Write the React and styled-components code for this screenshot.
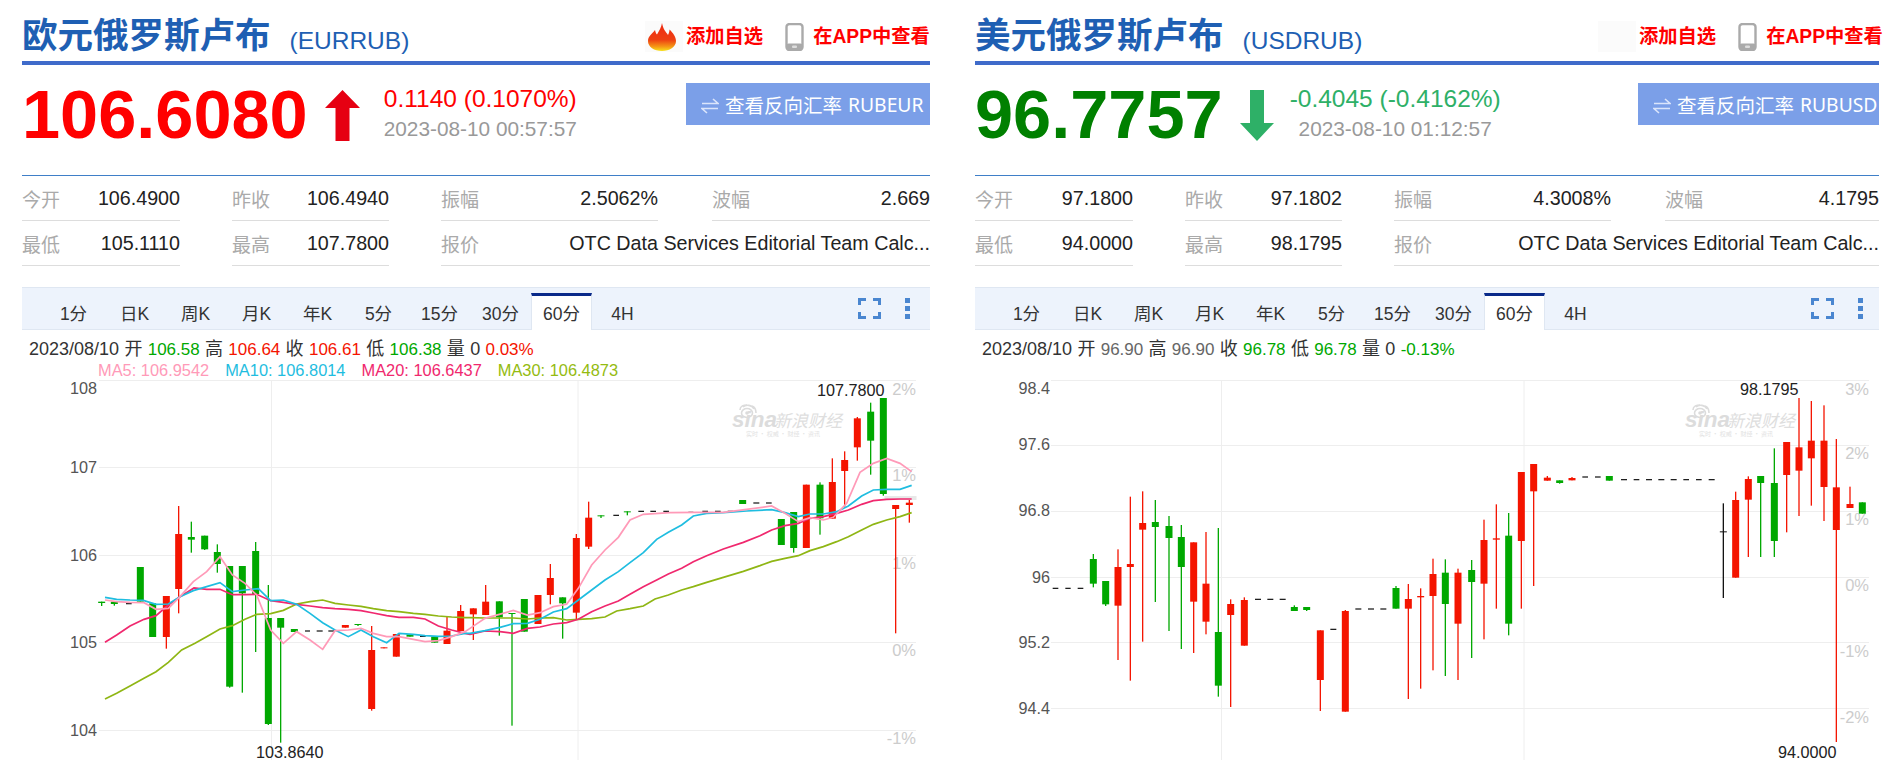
import React from 'react';
import styled, { createGlobalStyle } from 'styled-components';

const GlobalStyle = createGlobalStyle`
  html, body {
    margin: 0;
    padding: 0;
    background: #fff;
    overflow: hidden;
  }
  body {
    font-family: "Liberation Sans", "Noto Sans CJK SC", sans-serif;
  }
`;

const RED = '#f41400';
const GREEN = '#00a800';

const Page = styled.div`
  display: flex;
  gap: 45px;
  width: 1900px;
  height: 760px;
  padding-left: 22px;
  box-sizing: border-box;
  overflow: hidden;
`;
const Panel = styled.section`
  width: ${props => props.$width}px;
  flex: none;
`;
const Head = styled.header`
  display: flex;
  align-items: flex-start;
  height: 61px;
  border-bottom: 4px solid #3f6bca;
`;
const TitleGroup = styled.div`
  display: flex;
  align-items: flex-start;
  width: 623px;
  flex: none;
`;
const Title = styled.h1`
  margin: 16px 0 0;
  font-size: 35.5px;
  line-height: 40px;
  font-weight: 700;
  color: #1e5fb3;
  white-space: nowrap;
`;
const Code = styled.span`
  margin: 27px 0 0 19px;
  font-size: 24.5px;
  line-height: 28px;
  color: #1e5fb3;
`;
const Actions = styled.div`
  display: flex;
  align-items: center;
  margin-top: 21px;
  height: 31px;
`;
const FlameBox = styled.div`
  width: 38px;
  height: 31px;
  background: #fbfbfb;
  display: flex;
  flex: none;
  padding-left: 2px;
  box-sizing: border-box;
`;
const ActionText = styled.span`
  margin-left: ${props => props.$gap}px;
  font-size: 19.3px;
  line-height: 24px;
  font-weight: 700;
  color: #f00;
  white-space: nowrap;
`;
const PhoneIcon = styled.svg`
  margin-left: 22px;
  flex: none;
`;
const Quote = styled.div`
  display: flex;
  height: 110px;
  border-bottom: 1px solid #3f7fc8;
  box-sizing: content-box;
`;
const Price = styled.div`
  margin-top: 11px;
  font-size: 68.5px;
  line-height: 78px;
  font-weight: 700;
  color: ${props => (props.$up ? '#f00' : '#008000')};
`;
const Arrow = styled.svg`
  flex: none;
  margin: 25px ${props => (props.$up ? 24 : 16)}px 0 17px;
`;
const Change = styled.div`
  margin-top: 20px;
  text-align: center;
`;
const ChangeValue = styled.div`
  font-size: 24.5px;
  line-height: 28px;
  color: ${props => (props.$up ? '#f00' : '#2eb067')};
  white-space: nowrap;
`;
const Time = styled.div`
  margin-top: 3px;
  font-size: 20.8px;
  line-height: 26px;
  color: #999;
  white-space: nowrap;
`;
const ReverseButton = styled.div`
  display: flex;
  align-items: center;
  box-sizing: border-box;
  margin: 18px 0 0 auto;
  width: ${props => props.$width}px;
  height: 42px;
  padding-left: 15px;
  background: #7b9fe8;
  color: #fff;
  font-family: "Noto Sans", "Noto Sans CJK SC", sans-serif;
  font-size: 19.5px;
  white-space: nowrap;
`;
const ReversePair = styled.span`
  margin-left: 6px;
  font-size: 19.3px;
`;
const ReverseIcon = styled.svg`
  margin: 4px 6px 0 0;
  flex: none;
`;
const Stats = styled.div`
  display: grid;
  grid-template-columns: 158px 157px 217px 1fr;
  column-gap: 52px;
  grid-auto-rows: 45px;
`;
const Stat = styled.div`
  display: flex;
  justify-content: space-between;
  align-items: center;
  border-bottom: 1px solid #ddd;
  grid-column: ${props => (props.$wide ? 'span 2' : 'auto')};
  margin-left: ${props => (props.$last ? 2 : 0)}px;
`;
const StatLabel = styled.span`
  font-size: 19px;
  color: #aaa;
`;
const StatValue = styled.span`
  font-size: 19.7px;
  color: #222;
  white-space: nowrap;
`;
const TabBar = styled.div`
  display: flex;
  align-items: flex-end;
  box-sizing: border-box;
  margin-top: 21px;
  height: 43px;
  padding-left: 21px;
  background: #edf3fc;
  border-top: 1px solid #dfe7f2;
  border-bottom: 1px solid #dfe7f2;
`;
const Tab = styled.div`
  box-sizing: border-box;
  width: 61px;
  height: 37px;
  margin-bottom: -1px;
  font-size: 17.5px;
  line-height: 36px;
  text-align: center;
  color: #333;
  background: ${props => (props.$active ? '#fff' : 'transparent')};
  border-top: 3px solid ${props => (props.$active ? '#0a2a8a' : 'transparent')};
  border-left: 1px solid ${props => (props.$active ? '#dfe7f2' : 'transparent')};
  border-right: 1px solid ${props => (props.$active ? '#dfe7f2' : 'transparent')};
`;
const TabTools = styled.div`
  display: flex;
  align-items: center;
  gap: 24px;
  margin-left: auto;
  height: 41px;
  padding-right: ${props => props.$pad}px;
  align-self: center;
`;
const Dots = styled.div`
  display: flex;
  flex-direction: column;
  gap: 3px;
`;
const Dot = styled.i`
  display: block;
  width: 5px;
  height: 5px;
  background: #4a86d0;
`;
const Info = styled.div`
  height: 50px;
  padding-top: 9px;
  box-sizing: border-box;
  font-size: 18px;
  line-height: 21px;
  color: #333;
`;
const InfoLine = styled.div`
  padding-left: 7px;
  white-space: nowrap;
  word-spacing: 0.3px;
`;
const Num = styled.span`
  font-size: 17px;
  color: ${props => (props.$c === 'g' ? GREEN : props.$c === 'r' ? RED : '#666')};
`;
const MaLine = styled.div`
  display: flex;
  gap: 16px;
  padding-left: 76px;
  font-size: 16.4px;
`;
const MaItem = styled.span`
  color: ${props => props.$color};
  white-space: nowrap;
`;
const ChartSvg = styled.svg`
  display: block;
`;
const AxisText = styled.text`
  font-family: "Liberation Sans", sans-serif;
  font-size: 16.2px;
  fill: #555;
`;
const PctText = styled(AxisText)`
  fill: #ccc;
  font-size: 16.5px;
`;
const ExtremeText = styled(AxisText)`
  fill: #222;
`;
const MarkSina = styled.text`
  font-family: "Liberation Sans", sans-serif;
  font-size: 22.5px;
  font-weight: 700;
  font-style: italic;
  fill: #dcdcdc;
`;
const MarkName = styled.text`
  font-family: "Noto Sans CJK SC", sans-serif;
  font-size: 17px;
  font-style: italic;
  fill: #dedede;
`;
const MarkSub = styled.text`
  font-family: "Noto Sans CJK SC", sans-serif;
  font-size: 6px;
  fill: #e2e2e2;
`;

// chart data traced from 3x crops: x is in crop px from ox, y in crop px from 370
const eurGroups = [
  {
    ox: 0,
    candles: [
      [305, 695, 699, null, 708, 'g'], [343, 695, 702, null, 707, 'g'], [421, 591, 695, null, null, 'g'],
      [458, 700, 801, null, null, 'g'], [499, 678, 801, null, 836, 'r'], [536, 492, 657, 408, 730, 'r'],
      [574, 501, 509, 455, 548, 'g'], [614, 497, 538, null, 540, 'g'], [652, 546, 582, 523, 608, 'g'],
      [689, 588, 950, null, 953, 'g'], [727, 588, 670, null, 968, 'g'], [767, 543, 672, 516, 846, 'g'],
      [805, 744, 1062, 645, 1065, 'g'], [842, 744, 773, null, 1118, 'g'], [883, 777, 786, null, null, 'g'],
      [1036, 765, 773, null, null, 'r'], [1074, 762, 765, null, 768, 'g'], [1115, 840, 1017, 768, 1022, 'r'],
      [1152, 832, 835, null, null, 'r'], [1189, 792, 860, null, null, 'r'], [1230, 793, 800, null, null, 'g'],
      [1304, 800, 818, null, null, 'g'], [1341, 782, 822, 740, null, 'r'], [1382, 723, 783, 705, null, 'r'],
    ],
    dashes: [[378, 395, 701], [915, 930, 783], [950, 968, 783], [985, 1003, 783], [1260, 1277, 799]],
  },
  {
    ox: 470,
    candles: [
      [10, 715, 733, null, 810, 'r'], [47, 695, 735, 645, null, 'r'], [88, 694, 742, null, 797, 'g'],
      [126, 729, 732, null, 1067, 'g'], [163, 687, 785, null, null, 'g'], [204, 675, 762, null, null, 'r'],
      [241, 624, 675, 582, 703, 'r'], [278, 682, 700, null, 806, 'g'], [319, 504, 728, 492, 748, 'r'],
      [356, 443, 530, 395, 537, 'r'], [393, 436, 439, null, 444, 'g'], [472, 424, 427, null, 436, 'g'],
      [818, 390, 402, null, null, 'g'], [934, 447, 525, null, null, 'g'], [971, 426, 534, null, 548, 'g'],
      [1009, 344, 534, null, null, 'r'], [1050, 344, 445, 337, 494, 'g'], [1087, 336, 446, 265, null, 'r'],
      [1124, 270, 303, 244, 410, 'r'], [1162, 145, 232, 141, 272, 'r'], [1202, 125, 212, 98, 314, 'g'],
      [1240, 84, 372, null, 377, 'g'], [1277, 405, 417, null, 790, 'r'], [1318, 398, 405, 390, 458, 'r'],
    ],
    dashes: [
      [430, 447, 436], [505, 522, 424], [541, 558, 424], [580, 597, 424], [655, 670, 427], [697, 714, 424],
      [735, 752, 424], [773, 790, 424], [850, 868, 399], [888, 905, 399],
    ],
  },
];

const maLines = [
  {
    color: '#8fb614',
    a: [[315,987],[350,970],[390,948],[432,925],[468,905],[505,877],[545,840],[585,820],[625,797],[660,777],[697,767],[735,748],[770,733],[812,731],[850,721],[890,702],[930,695],[968,690],[1005,700],[1045,705],[1083,709],[1120,716],[1160,722],[1197,725],[1240,730],[1275,733],[1315,738],[1355,741],[1395,743]],
    b: [[0,743],[45,744],[90,744],[130,744],[172,747],[210,744],[250,743],[290,750],[325,748],[365,746],[405,741],[440,723],[480,716],[520,708],[555,687],[595,675],[635,660],[670,650],[710,637],[760,622],[820,604],[870,587],[905,574],[945,565],[985,557],[1020,542],[1060,530],[1100,515],[1135,500],[1175,480],[1210,463],[1250,450],[1290,440],[1325,428]],
  },
  {
    color: '#f0286e',
    a: [[315,817],[350,795],[390,768],[432,748],[468,737],[505,705],[540,680],[582,654],[620,658],[660,658],[697,674],[735,674],[770,673],[812,692],[850,697],[890,703],[930,708],[968,713],[1005,716],[1045,718],[1083,722],[1120,729],[1160,737],[1197,742],[1240,742],[1275,747],[1315,768],[1355,780],[1395,790]],
    b: [[0,793],[45,783],[90,785],[130,790],[172,775],[210,771],[250,762],[290,758],[325,748],[365,725],[405,708],[445,693],[480,673],[520,650],[560,630],[595,612],[635,595],[670,575],[710,557],[760,537],[820,517],[870,497],[905,480],[945,467],[985,460],[1020,445],[1060,440],[1100,430],[1135,420],[1175,403],[1210,392],[1250,388],[1290,387],[1325,387]],
  },
  {
    color: '#1fbde0',
    a: [[315,682],[350,688],[390,690],[430,691],[468,703],[505,702],[540,680],[580,662],[620,650],[660,638],[697,665],[735,660],[775,656],[812,692],[850,690],[890,703],[930,730],[968,758],[1005,780],[1045,800],[1083,780],[1120,800],[1160,818],[1197,790],[1240,793],[1275,797],[1315,799],[1355,798],[1395,790]],
    b: [[0,790],[45,782],[90,772],[130,761],[172,760],[210,748],[250,726],[290,716],[325,690],[365,660],[405,630],[445,605],[480,578],[520,548],[560,508],[595,487],[635,465],[670,438],[710,430],[760,428],[830,423],[905,419],[945,428],[985,440],[1020,432],[1060,432],[1100,425],[1135,408],[1175,378],[1210,360],[1250,358],[1290,358],[1325,346]],
  },
  {
    color: '#ff9ab8',
    a: [[315,690],[350,695],[390,697],[432,698],[468,718],[505,715],[540,680],[580,635],[620,605],[660,560],[697,615],[735,640],[770,675],[812,780],[850,820],[890,785],[930,810],[968,838],[1005,782],[1045,780],[1083,775],[1120,790],[1160,800],[1197,800],[1240,808],[1275,815],[1315,812],[1355,800],[1395,785]],
    b: [[0,775],[45,745],[88,733],[130,721],[172,735],[210,728],[250,710],[290,703],[325,655],[365,585],[405,540],[445,502],[480,450],[520,433],[600,428],[680,427],[760,427],[830,418],[905,408],[945,430],[985,455],[1020,443],[1060,450],[1090,442],[1130,400],[1170,307],[1210,280],[1250,265],[1290,280],[1325,305]],
  },
];

const usdGroups = [
  {
    ox: 960,
    candles: [
      [400, 567, 641, 552, 652, 'g'], [437, 633, 703, null, 708, 'g'], [474, 591, 707, 538, 870, 'r'],
      [511, 582, 591, 380, 932, 'r'], [548, 459, 479, 364, 815, 'r'], [586, 456, 471, 390, 696, 'g'],
      [627, 468, 504, 438, 783, 'g'], [664, 501, 591, 465, 837, 'g'], [701, 517, 695, null, 849, 'r'],
      [738, 641, 755, 486, 793, 'r'], [775, 786, 947, 474, 980, 'g'], [812, 702, 735, 688, 1011, 'r'],
      [853, 690, 827, 682, null, 'r'], [1003, 711, 723, 706, null, 'g'], [1040, 711, 720, null, 723, 'g'],
      [1081, 781, 930, null, 1023, 'r'], [1156, 723, 1025, 720, null, 'r'], [1308, 654, 716, 648, null, 'g'],
      [1345, 687, 716, 642, 987, 'r'], [1382, 678, 682, 655, 956, 'r'], [1419, 612, 678, 566, 901, 'r'],
    ],
    dashes: [
      [278, 295, 655], [316, 332, 655], [353, 370, 655], [885, 903, 688], [922, 940, 688], [959, 977, 688],
      [1111, 1129, 778], [1186, 1204, 717], [1224, 1242, 717], [1261, 1279, 717],
    ],
  },
  {
    ox: 1420,
    candles: [
      [76, 608, 702, 568, 918, 'g'], [114, 608, 761, 596, 930, 'r'], [155, 600, 636, 570, 864, 'g'],
      [192, 510, 641, 449, 808, 'r'], [229, 505, 509, 403, 716, 'r'], [266, 497, 761, 429, 796, 'g'],
      [304, 306, 513, null, 716, 'r'], [341, 282, 364, null, 648, 'r'], [382, 323, 332, 318, null, 'r'],
      [419, 331, 339, null, 341, 'g'], [456, 324, 331, 321, null, 'r'], [568, 318, 332, null, null, 'g'],
      [910, 484, 487, 400, 684, 'k'], [947, 390, 623, 365, null, 'r'], [985, 327, 389, 319, 561, 'r'],
      [1022, 318, 339, null, 561, 'g'], [1063, 339, 513, 235, 561, 'g'], [1100, 216, 315, null, 487, 'r'],
      [1137, 232, 302, 84, 438, 'r'], [1174, 212, 265, 93, 407, 'r'], [1212, 212, 351, 106, 453, 'r'],
      [1249, 352, 480, 207, 1116, 'r'], [1290, 402, 414, 350, null, 'r'], [1327, 397, 431, null, null, 'g'],
    ],
    dashes: [
      [487, 504, 321], [525, 542, 321], [603, 621, 329], [641, 658, 329], [678, 696, 329], [715, 733, 329],
      [752, 770, 329], [790, 807, 329], [828, 845, 329], [866, 884, 329],
    ],
  },
];

const eurChart = {
  left: 22,
  width: 908,
  gridX: [99, 916],
  gridV: [271.5, 578],
  gridY: [380.5, 467.5, 555.5, 642.5, 730.5],
  axis: [['108', 388], ['107', 467], ['106', 555], ['105', 642], ['104', 730]],
  axisEnd: 97,
  pct: [['2%', 389], ['1%', 475], ['1%', 563], ['0%', 650], ['-1%', 738]],
  pctEnd: 916,
  extremes: [['107.7800', 817, 390], ['103.8640', 256, 752]],
  groups: eurGroups,
  lines: maLines,
  band: [884.5, 496, 32, 4],
};

const usdChart = {
  left: 975,
  width: 904,
  gridX: [1051, 1869],
  gridV: [1221.5, 1524],
  gridY: [380.5, 445.5, 511.5, 577.5, 642.5, 708.5],
  axis: [['98.4', 388], ['97.6', 444], ['96.8', 510], ['96', 577], ['95.2', 642], ['94.4', 708]],
  axisEnd: 1050,
  pct: [['3%', 389], ['2%', 453], ['1%', 519], ['0%', 585], ['-1%', 651], ['-2%', 717]],
  pctEnd: 1869,
  extremes: [['98.1795', 1740, 389], ['94.0000', 1778, 752]],
  groups: usdGroups,
  lines: [],
};

const candleColor = { r: RED, g: GREEN, k: '#111' };
const toY = y => 370 + y / 3;

const Candle = ({ ox, data }) => {
  const [zx, top, bottom, high, low, c] = data;
  const x = ox + zx / 3;
  const fill = candleColor[c];
  const y1 = toY(high === null ? top : high);
  const y2 = toY(low === null ? bottom : low);
  return (
    <g fill={fill}>
      <rect x={x - 0.65} y={y1} width={1.3} height={y2 - y1} />
      <rect x={x - 3.5} y={toY(top)} width={7} height={Math.max(toY(bottom) - toY(top), 1)} />
    </g>
  );
};

const SinaMark = ({ x }) => (
  <g transform={`translate(${x} 405)`}>
    <g fill="none" stroke="#dcdcdc" strokeWidth="1.6">
      <ellipse cx="15" cy="8" rx="5.5" ry="4.5" />
      <path d="M8 5 C8 1 12 0 15 0 M11 2 C14 -1 20 0 22 4 M20 1 C23 2 24 5 24 8" />
    </g>
    <circle cx="15" cy="8" r="1.8" fill="#dcdcdc" />
    <MarkSina x="0" y="22">sina</MarkSina>
    <MarkName x="42" y="22">新浪财经</MarkName>
    <MarkSub x="14" y="31">实时 · 权威 · 财经 · 资讯</MarkSub>
  </g>
);

const Chart = ({ chart }) => (
  <ChartSvg
    width={chart.width}
    height="380"
    viewBox={`${chart.left} 380 ${chart.width} 380`}
  >
    {chart.gridY.map(y => (
      <line key={y} x1={chart.gridX[0]} x2={chart.gridX[1]} y1={y} y2={y} stroke="#eee" />
    ))}
    {chart.gridV.map(x => (
      <line key={x} x1={x} x2={x} y1="380" y2="760" stroke="#eee" />
    ))}
    {chart.band && (
      <rect x={chart.band[0]} y={chart.band[1]} width={chart.band[2]} height={chart.band[3]} fill="#e8e8e8" />
    )}
    <SinaMark x={chart.left + 710} />
    {chart.axis.map(([label, y]) => (
      <AxisText key={label} x={chart.axisEnd} y={y} textAnchor="end" dominantBaseline="central">
        {label}
      </AxisText>
    ))}
    {chart.pct.map(([label, y]) => (
      <PctText key={y} x={chart.pctEnd} y={y} textAnchor="end" dominantBaseline="central">
        {label}
      </PctText>
    ))}
    {chart.groups.map(group => (
      <g key={group.ox}>
        {group.dashes.map(([x1, x2, y]) => (
          <rect key={`${x1}-${y}`} x={group.ox + x1 / 3} y={toY(y) - 0.6} width={(x2 - x1) / 3} height={1.2} fill="#111" />
        ))}
        {group.candles.map(data => (
          <Candle key={data[0]} ox={group.ox} data={data} />
        ))}
      </g>
    ))}
    {chart.lines.map(line => (
      <polyline
        key={line.color}
        fill="none"
        stroke={line.color}
        strokeWidth="1.7"
        points={[
          ...line.a.map(([x, y]) => `${x / 3},${toY(y)}`),
          ...line.b.map(([x, y]) => `${470 + x / 3},${toY(y)}`),
        ].join(' ')}
      />
    ))}
    {chart.extremes.map(([label, x, y]) => (
      <ExtremeText key={label} x={x} y={y} dominantBaseline="central">
        {label}
      </ExtremeText>
    ))}
  </ChartSvg>
);

const Flame = () => (
  <svg width="30" height="31" viewBox="0 0 30 31">
    <defs>
      <linearGradient id="flameFill" x1="0" y1="0" x2="0" y2="1">
        <stop offset="0" stopColor="#ee2a12" />
        <stop offset="0.6" stopColor="#ee3f12" />
        <stop offset="0.85" stopColor="#f59a16" />
        <stop offset="1" stopColor="#f8e21a" />
      </linearGradient>
    </defs>
    <path
      d="M15 2 C16 8 19 11 21 14 C22 12 22.5 10 22.5 8.5 C26 12 29 16 29 20 C29 26 22.5 30 15 30 C7 30 1 26 1 20 C1 15 5 13 8 9 C8.5 11 9 12.5 10 13.5 C12 10 14.5 6 15 2 Z"
      fill="url(#flameFill)"
    />
  </svg>
);

const Phone = () => (
  <PhoneIcon width="19" height="28" viewBox="0 0 19 28">
    <rect x="1.5" y="1" width="16" height="26" rx="3" fill="#fff" stroke="#aaa" strokeWidth="2.4" />
    <rect x="1.5" y="20.5" width="16" height="6.5" rx="2" fill="#aaa" />
    <rect x="7" y="22.5" width="5" height="2.4" rx="1" fill="#ddd" />
  </PhoneIcon>
);

const ReverseArrows = () => (
  <ReverseIcon width="18" height="18" viewBox="0 0 18 18">
    <g fill="none" stroke="#dbe5fb" strokeWidth="1.6">
      <path d="M1 6.5 H17 L12 2" />
      <path d="M17 11.5 H1 L6 16" />
    </g>
  </ReverseIcon>
);

const UpArrow = () => (
  <Arrow $up width="35" height="51" viewBox="0 0 35 51">
    <path d="M17.5 0 L35 18 L24.5 18 L24.5 51 L10.5 51 L10.5 18 L0 18 Z" fill="#e60012" />
  </Arrow>
);

const DownArrow = () => (
  <Arrow width="34" height="51" viewBox="0 0 34 51">
    <path d="M10 0 L24 0 L24 33 L34 33 L17 51 L0 33 L10 33 Z" fill="#2eb067" />
  </Arrow>
);

const FullscreenIcon = () => (
  <svg width="23" height="21" viewBox="0 0 23 21">
    <path
      d="M1.5 7 V1.5 H8 M15 1.5 H21.5 V7 M21.5 14 V19.5 H15 M8 19.5 H1.5 V14"
      fill="none"
      stroke="#4a86d0"
      strokeWidth="3"
    />
  </svg>
);

const tabs = ['1分', '日K', '周K', '月K', '年K', '5分', '15分', '30分', '60分', '4H'];

const Market = ({ m }) => (
  <Panel $width={m.width}>
    <Head>
      <TitleGroup>
        <Title>{m.title}</Title>
        <Code>({m.code})</Code>
      </TitleGroup>
      <Actions>
        <FlameBox>{m.flame && <Flame />}</FlameBox>
        <ActionText $gap={3}>添加自选</ActionText>
        <Phone />
        <ActionText $gap={9}>在APP中查看</ActionText>
      </Actions>
    </Head>
    <Quote>
      <Price $up={m.up}>{m.price}</Price>
      {m.up ? <UpArrow /> : <DownArrow />}
      <Change>
        <ChangeValue $up={m.up}>{m.change}</ChangeValue>
        <Time>{m.time}</Time>
      </Change>
      <ReverseButton $width={m.buttonWidth}>
        <ReverseArrows />
        查看反向汇率
        <ReversePair>{m.reverse}</ReversePair>
      </ReverseButton>
    </Quote>
    <Stats>
      <Stat><StatLabel>今开</StatLabel><StatValue>{m.open}</StatValue></Stat>
      <Stat><StatLabel>昨收</StatLabel><StatValue>{m.prev}</StatValue></Stat>
      <Stat><StatLabel>振幅</StatLabel><StatValue>{m.amp}</StatValue></Stat>
      <Stat $last><StatLabel>波幅</StatLabel><StatValue>{m.wave}</StatValue></Stat>
      <Stat><StatLabel>最低</StatLabel><StatValue>{m.low}</StatValue></Stat>
      <Stat><StatLabel>最高</StatLabel><StatValue>{m.high}</StatValue></Stat>
      <Stat $wide><StatLabel>报价</StatLabel><StatValue>OTC Data Services Editorial Team Calc...</StatValue></Stat>
    </Stats>
    <TabBar>
      {tabs.map(t => (
        <Tab key={t} $active={t === '60分'}>{t}</Tab>
      ))}
      <TabTools $pad={m.toolsPad}>
        <FullscreenIcon />
        <Dots><Dot /><Dot /><Dot /></Dots>
      </TabTools>
    </TabBar>
    <Info>
      <InfoLine>
        2023/08/10 开 <Num $c={m.bar.o[1]}>{m.bar.o[0]}</Num> 高 <Num $c={m.bar.h[1]}>{m.bar.h[0]}</Num> 收{' '}
        <Num $c={m.bar.c[1]}>{m.bar.c[0]}</Num> 低 <Num $c={m.bar.l[1]}>{m.bar.l[0]}</Num> 量 0{' '}
        <Num $c={m.bar.p[1]}>{m.bar.p[0]}</Num>
      </InfoLine>
      {m.ma && (
        <MaLine>
          {m.ma.map(([text, color]) => (
            <MaItem key={text} $color={color}>{text}</MaItem>
          ))}
        </MaLine>
      )}
    </Info>
    <Chart chart={m.chart} />
  </Panel>
);

const markets = [
  {
    width: 908,
    title: '欧元俄罗斯卢布',
    code: 'EURRUB',
    flame: true,
    up: true,
    price: '106.6080',
    change: '0.1140 (0.1070%)',
    time: '2023-08-10 00:57:57',
    reverse: 'RUBEUR',
    buttonWidth: 244,
    toolsPad: 20,
    open: '106.4900',
    prev: '106.4940',
    amp: '2.5062%',
    wave: '2.669',
    low: '105.1110',
    high: '107.7800',
    bar: {
      o: ['106.58', 'g'],
      h: ['106.64', 'r'],
      c: ['106.61', 'r'],
      l: ['106.38', 'g'],
      p: ['0.03%', 'r'],
    },
    ma: [
      ['MA5: 106.9542', '#ff9ab8'],
      ['MA10: 106.8014', '#1fbde0'],
      ['MA20: 106.6437', '#f0286e'],
      ['MA30: 106.4873', '#94bb10'],
    ],
    chart: eurChart,
  },
  {
    width: 904,
    title: '美元俄罗斯卢布',
    code: 'USDRUB',
    flame: false,
    up: false,
    price: '96.7757',
    change: '-0.4045 (-0.4162%)',
    time: '2023-08-10 01:12:57',
    reverse: 'RUBUSD',
    buttonWidth: 241,
    toolsPad: 16,
    open: '97.1800',
    prev: '97.1802',
    amp: '4.3008%',
    wave: '4.1795',
    low: '94.0000',
    high: '98.1795',
    bar: {
      o: ['96.90', 'n'],
      h: ['96.90', 'n'],
      c: ['96.78', 'g'],
      l: ['96.78', 'g'],
      p: ['-0.13%', 'g'],
    },
    chart: usdChart,
  },
];

const App = () => (
  <>
    <GlobalStyle />
    <Page>
      {markets.map(m => (
        <Market key={m.code} m={m} />
      ))}
    </Page>
  </>
);

export default App;
